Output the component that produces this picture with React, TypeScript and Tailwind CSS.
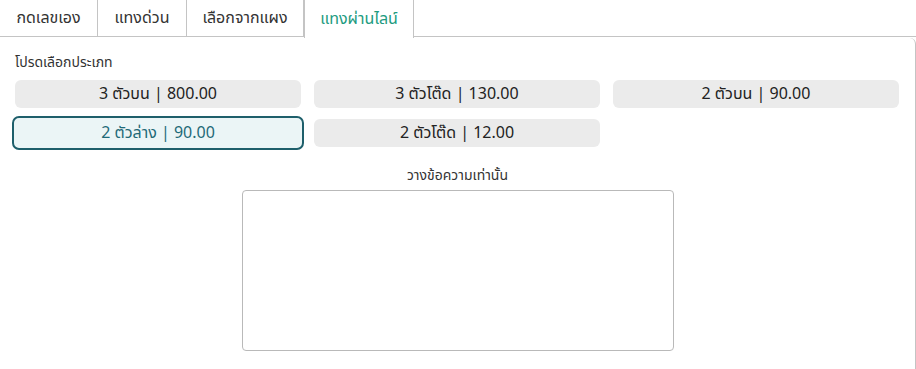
import { useState } from 'react';

const TABS = [
  { label: 'กดเลขเอง', w: 'w-[98px]' },
  { label: 'แทงด่วน', w: 'w-[89px]' },
  { label: 'เลือกจากแผง', w: 'w-[117px]' },
  { label: 'แทงผ่านไลน์', w: 'w-[110px]' },
];

const TYPES = [
  { key: '3top', label: '3 ตัวบน | 800.00' },
  { key: '3tod', label: '3 ตัวโต๊ด | 130.00' },
  { key: '2top', label: '2 ตัวบน | 90.00' },
  { key: '2bottom', label: '2 ตัวล่าง | 90.00' },
  { key: '2tod', label: '2 ตัวโต๊ด | 12.00' },
];

export default function App() {
  const [tab, setTab] = useState(3);
  const [type, setType] = useState('2bottom');
  const [text, setText] = useState('');

  return (
    <div
      className="h-[369px] w-[916px] overflow-hidden bg-white text-[#333]"
      style={{ fontFamily: '"Noto Sans Thai", "Noto Sans", "Liberation Sans", sans-serif' }}
    >
      <div className="flex h-[38px]">
        {TABS.map((t, i) => (
          <button
            key={t.label}
            onClick={() => setTab(i)}
            className={
              i === tab
                ? `relative z-10 -mb-px flex h-[38px] items-center justify-center border-x border-[#c4c4c4] bg-white text-[16px] text-[#1d9b80] ${t.w}`
                : `flex h-[37px] items-center justify-center border-b border-r border-[#c4c4c4] text-[16px] text-[#333] ${t.w}`
            }
          >
            {t.label}
          </button>
        ))}
        <div className="h-[37px] flex-1 rounded-tr-[6px] border-b border-[#c4c4c4]" />
      </div>

      <div className="h-[331px] rounded-tr-[6px] border-r border-[#c4c4c4] px-[15px] pt-[15px]">
        <p className="mb-[7px] text-[14px] leading-[20px] text-[#333]">โปรดเลือกประเภท</p>
        <div className="grid grid-cols-3 gap-x-[13px] gap-y-[11px] pr-[1px]">
          {TYPES.map((t) =>
            t.key === type ? (
              <button
                key={t.key}
                onClick={() => setType(t.key)}
                className="-m-[3px] h-[34px] rounded-[7px] border-2 border-[#1e5f6b] bg-[#ebf5f6] text-[16px] text-[#1f6a78]"
              >
                {t.label}
              </button>
            ) : (
              <button
                key={t.key}
                onClick={() => setType(t.key)}
                className="h-[28px] rounded-[6px] bg-[#ebebeb] text-[16px] text-[#222]"
              >
                {t.label}
              </button>
            ),
          )}
        </div>

        <div className="mt-[19px] flex flex-col items-center">
          <p className="mb-[4px] text-[14px] leading-[20px] text-[#333]">วางข้อความเท่านั้น</p>
          <textarea
            value={text}
            onChange={(e) => setText(e.target.value)}
            className="ml-[1px] h-[161px] w-[432px] resize-none rounded-[4px] border border-[#b9b9b9] p-2 text-sm outline-none"
          />
        </div>
      </div>
    </div>
  );
}
